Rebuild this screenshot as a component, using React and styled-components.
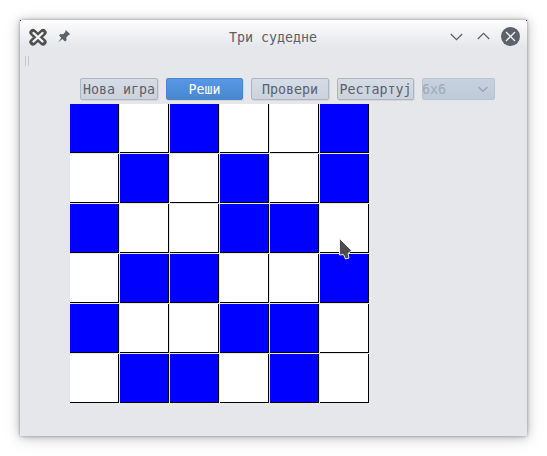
import React from "react";
import styled, { createGlobalStyle } from "styled-components";

const GlobalStyle = createGlobalStyle`
  * { box-sizing: border-box; }
  body { margin: 0; background: #fff; overflow: hidden; }
`;

const Desktop = styled.div`
  width: 547px;
  height: 456px;
  padding: 20px;
  background: #fff;
  font: 200 13.3px/16px "DejaVu Sans Mono", "Liberation Mono", monospace;
  color: #5c616c;
`;

const Window = styled.main`
  width: 507px;
  height: 416px;
  background:
    linear-gradient(#333, #333) 0 0 / 1px 1px no-repeat,
    linear-gradient(#333, #333) 100% 0 / 1px 1px no-repeat,
    linear-gradient(#fdfdfe 0, #e6e7eb 27px);
  box-shadow: 0 0 3px rgba(0, 0, 0, 0.32), 0 1px 10px rgba(0, 0, 0, 0.27), 0 3px 22px rgba(0, 0, 0, 0.07);
`;

const TitleBar = styled.header`
  display: grid;
  grid-template-columns: 60px 1fr 81px;
  height: 34px;
`;

const Title = styled.h1`
  margin: 0;
  padding: 10px 0 0 149px;
  font: inherit;
  white-space: pre;
`;

const DragHandle = styled.div`
  width: 4px;
  height: 10px;
  margin: 2px 0 0 5px;
  border: solid #c8c9ce;
  border-width: 0 1px;
`;

const Toolbar = styled.div`
  display: grid;
  grid-template-columns: 78px 77px 78px 77px 73px;
  gap: 8px;
  height: 22px;
  margin: 12px 0 4px 60px;
`;

const Button = styled.button`
  display: flex;
  justify-content: center;
  min-width: 0;
  height: 22px;
  padding: 3px 0 0;
  border: 1px solid ${(p) => (p.$active ? "#4a86ca" : "#adb5c1")};
  border-radius: 2px;
  background: ${(p) => (p.$active ? "linear-gradient(#5798e6, #4a87ce)" : "linear-gradient(#d6dce5, #cbd2dc)")};
  box-shadow: 1px 1px 0 rgba(90, 100, 120, 0.13);
  color: ${(p) => (p.$active ? "#fff" : "#5c616c")};
  font: inherit;
  white-space: nowrap;
`;

const SizeSelect = styled.div`
  display: flex;
  justify-content: space-between;
  height: 22px;
  padding: 3px 4px 0 0;
  border: 1px solid #b9c4d2;
  border-radius: 2px;
  background: linear-gradient(#c7d1df, #bfcad7);
  color: #a0a9b6;
`;

const SizeValue = styled.span`
  margin-left: -1px;
`;

const Board = styled.div`
  display: grid;
  grid-template-columns: repeat(6, 49px);
  grid-auto-rows: 49px;
  gap: 1px;
  margin-left: 50px;
`;

const Cell = styled.div`
  background: ${(p) => (p.$filled ? "#00f" : "#fff")};
  box-shadow: inset -1px -1px #000;
`;

const Pointer = styled.svg`
  position: absolute;
  left: 338px;
  top: 237px;
`;

const rows = ["101001", "010101", "100110", "011001", "100110", "011010"];

export default function App() {
  return (
    <>
      <GlobalStyle />
      <Desktop>
        <Window>
          <TitleBar>
            <svg width="60" height="34" viewBox="0 0 60 34">
              <path d="M13 12.500l10 9.500m0-9.500l-10 9.500" fill="none" stroke="#50504e" strokeWidth="7.200" strokeLinecap="round" />
              <path d="M13.500 13l9 8.500m0-8.500l-9 8.500" fill="none" stroke="#f4f4f6" strokeWidth="2.400" strokeLinecap="round" />
              <path d="M45.700 10l4.500 4.200-1.600.8-2.400 2.400.4 2.900-1.600 1.200-2.600-2.500-4 3.300 2.900-4.600-2.200-2.100 1.200-1.500 2.900.2 2.100-2.300z" fill="#5c616c" />
            </svg>
            <Title>Три судедне</Title>
            <svg width="81" height="34" viewBox="0 0 81 34">
              <path d="M4.800 14l5.700 5.600 5.700-5.600M31.800 19l5.700-5.600 5.700 5.600" fill="none" stroke="#5c616c" strokeWidth="1.300" />
              <circle cx="64.500" cy="16.500" r="9.500" fill="#5c616c" />
              <path d="M60 12l9 9m0-9l-9 9" stroke="#f2f3f5" strokeWidth="1.300" />
            </svg>
          </TitleBar>
          <DragHandle />
          <Toolbar>
            <Button>Нова игра</Button>
            <Button $active>Реши</Button>
            <Button>Провери</Button>
            <Button>Рестартуј</Button>
            <SizeSelect>
              <SizeValue>6x6</SizeValue>
              <svg width="14" height="14" viewBox="0 0 14 14">
                <path d="M2.500 5l4.500 4.300L11.500 5" fill="none" stroke="#9aa5b3" strokeWidth="1.200" />
              </svg>
            </SizeSelect>
          </Toolbar>
          <Board>
            {rows.flatMap((row, y) => [...row].map((v, x) => <Cell key={`${y}-${x}`} $filled={v === "1"} />))}
          </Board>
        </Window>
        <Pointer width="18" height="24" viewBox="0 0 18 24">
          <path d="M1.500 1.500v16.500l4-.5 2 4.500 3.500-1-1-4.500 3.500-3z" fill="#4d4d4d" stroke="#eee" strokeWidth="1" />
        </Pointer>
      </Desktop>
    </>
  );
}
